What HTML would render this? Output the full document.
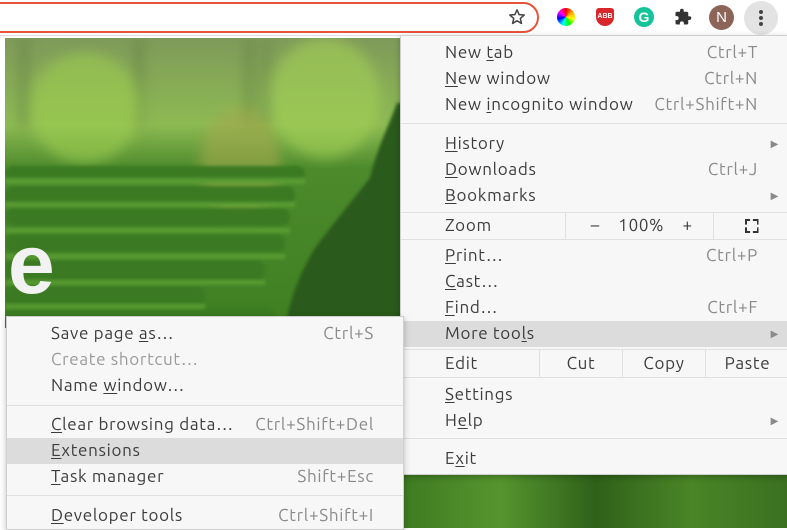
<!DOCTYPE html>
<html><head><meta charset="utf-8"><style>
*{margin:0;padding:0;box-sizing:border-box}
body{width:787px;height:528px;overflow:hidden;background:#fff;position:relative;font-family:"Ubuntu","Liberation Sans","DejaVu Sans",sans-serif;font-size:17px;letter-spacing:0.7px;color:#3c3c3c}
.top{position:absolute;left:0;top:0;width:787px;height:36px;background:#fff;border-bottom:1px solid #ddd}
.addr{position:absolute;left:-20px;top:2px;width:559px;height:31px;border:2px solid #e8533a;border-radius:16px;background:#fff}
.bg{position:absolute;left:5px;top:38px;width:782px;height:490px;overflow:hidden}
.bg2{position:absolute;left:404px;top:475px;width:383px;height:53px;background:linear-gradient(90deg,#3f7b22,#55952e,#2f611a,#4a8526,#3a7020)}
.e{position:absolute;left:8px;top:222px;font:bold 84px "Liberation Sans",sans-serif;color:#f2f2f2;line-height:1;letter-spacing:0}
.menu{position:absolute;background:#f7f7f7;border:1px solid #cfcfcf;box-shadow:0 2px 6px rgba(0,0,0,.25)}
.r{position:absolute;left:0;right:0;height:26px;line-height:26px;padding-left:44px;white-space:nowrap}
.r .k{position:absolute;right:29px;top:0;color:#8a8a8a}
.r .ar{position:absolute;right:8px;top:0;color:#8a8a8a;font-size:10px}
.hl{background:#dcdcdc}
.sep{position:absolute;left:0;right:0;height:1px;background:#e0e0e0}
.dis{color:#9a9a9a}
u{text-decoration:underline;text-underline-offset:2px}
.cell{position:absolute;top:0;height:100%;border-left:1px solid #e0e0e0;text-align:center;padding:0}
</style></head><body>
<div class="top"><div class="addr"></div>
<svg style="position:absolute;left:508px;top:8px" width="18" height="18" viewBox="0 0 24 24"><path d="M12 2.5l2.8 6.3 6.8.6-5.2 4.5 1.6 6.7L12 17l-5.9 3.6 1.6-6.7L2.4 9.4l6.8-.6z" fill="none" stroke="#444" stroke-width="2" stroke-linejoin="round"/></svg>
<div style="position:absolute;left:557px;top:8px;width:18px;height:18px;border-radius:50%;background:conic-gradient(red,orange,yellow,lime,cyan,blue,magenta,red)"></div>
<div style="position:absolute;left:596px;top:8px;width:18px;height:18px;background:#d9262a;border-radius:3px 3px 9px 9px;color:#fff;font:bold 7px sans-serif;text-align:center;line-height:18px;letter-spacing:0">ABB</div>
<div style="position:absolute;left:634px;top:7px;width:20px;height:20px;border-radius:50%;background:#15c39a;color:#fff;font:bold 14px sans-serif;text-align:center;line-height:20px;letter-spacing:0">G</div>
<svg style="position:absolute;left:674px;top:8px" width="18" height="18" viewBox="0 0 24 24"><path d="M20.5 11H19V7a2 2 0 0 0-2-2h-4V3.5a2.5 2.5 0 0 0-5 0V5H4a2 2 0 0 0-2 2v3.8h1.5a2.7 2.7 0 0 1 0 5.4H2V20a2 2 0 0 0 2 2h3.8v-1.5a2.7 2.7 0 0 1 5.4 0V22H17a2 2 0 0 0 2-2v-4h1.5a2.5 2.5 0 0 0 0-5z" fill="#333"/></svg>
<div style="position:absolute;left:709px;top:5px;width:25px;height:25px;border-radius:50%;background:#8d6458;color:#fff;font:15px sans-serif;text-align:center;line-height:25px;letter-spacing:0">N</div>
<div style="position:absolute;left:744px;top:1px;width:34px;height:34px;border-radius:50%;background:#e3e3e3"></div>
<div style="position:absolute;left:759px;top:10px;width:4px;height:4px;border-radius:50%;background:#444;box-shadow:0 6px 0 #444,0 12px 0 #444"></div>
</div>
<div class="bg"><svg width="400" height="290" viewBox="0 0 400 290">
<defs><linearGradient id="g" x1="0" y1="0" x2="0" y2="1"><stop offset="0" stop-color="#7f9a5a"/><stop offset=".3" stop-color="#8dba52"/><stop offset=".45" stop-color="#4c8a2c"/><stop offset="1" stop-color="#3f7f22"/></linearGradient>
<filter id="b"><feGaussianBlur stdDeviation="6"/></filter><filter id="b2"><feGaussianBlur stdDeviation="1.5"/></filter></defs>
<rect width="400" height="290" fill="url(#g)"/>
<g filter="url(#b)">
<g fill="#5f7f42" opacity=".6"><rect x="15" y="0" width="8" height="90"/><rect x="130" y="0" width="8" height="90"/><rect x="240" y="0" width="8" height="90"/><rect x="258" y="0" width="6" height="90"/></g>
<ellipse cx="80" cy="70" rx="55" ry="55" fill="#9ccd50" opacity=".6"/>
<ellipse cx="320" cy="60" rx="55" ry="60" fill="#a4d055" opacity=".6"/>
<ellipse cx="235" cy="125" rx="40" ry="55" fill="#a2a84c" opacity=".6"/>
</g>
<g filter="url(#b2)">
<g fill="#3b7a22"><rect y="128" width="300" height="16" rx="8"/><rect y="148" width="290" height="18" rx="8"/><rect y="170" width="285" height="18" rx="8"/><rect y="196" width="280" height="18" rx="8"/><rect y="222" width="260" height="20" rx="8"/><rect y="248" width="200" height="20" rx="8"/><rect y="270" width="270" height="20" rx="8"/></g>
<g fill="#5da236" opacity=".8"><rect y="140" width="300" height="6"/><rect y="164" width="290" height="5"/><rect y="190" width="285" height="5"/><rect y="216" width="280" height="5"/><rect y="242" width="260" height="5"/><rect y="266" width="200" height="5"/></g>
<path d="M392 65 C385 85 372 110 365 140 C345 165 325 190 310 210 C295 235 285 260 280 290 L400 290 L400 65 Z" fill="#2b5a1c"/>
</g>
</svg></div>
<div class="bg2"></div>
<div class="e">e</div>

<div class="menu" style="left:400px;top:35px;width:388px;height:440px">
<div class="r" style="top:4px">New <u>t</u>ab<span class="k">Ctrl+T</span></div>
<div class="r" style="top:30px"><u>N</u>ew window<span class="k">Ctrl+N</span></div>
<div class="r" style="top:56px">New <u>i</u>ncognito window<span class="k">Ctrl+Shift+N</span></div>
<div class="sep" style="top:87px"></div>
<div class="r" style="top:95px"><u>H</u>istory<span class="ar">▶</span></div>
<div class="r" style="top:121px"><u>D</u>ownloads<span class="k">Ctrl+J</span></div>
<div class="r" style="top:147px"><u>B</u>ookmarks<span class="ar">▶</span></div>
<div class="sep" style="top:176px"></div>
<div class="r" style="top:177px">Zoom
<div class="cell" style="left:164px;width:148px">&nbsp;–&nbsp;&nbsp;&nbsp;&nbsp;100%&nbsp;&nbsp;&nbsp;&nbsp;+</div>
<div class="cell" style="left:312px;width:76px"><span style="display:inline-block;width:14px;height:14px;margin-top:6px;border:2px solid #333;clip-path:polygon(0 0,40% 0,40% 40%,60% 40%,60% 0,100% 0,100% 40%,60% 40%,60% 60%,100% 60%,100% 100%,60% 100%,60% 60%,40% 60%,40% 100%,0 100%,0 60%,40% 60%,40% 40%,0 40%)"></span></div></div>
<div class="sep" style="top:203px"></div>
<div class="r" style="top:207px"><u>P</u>rint…<span class="k">Ctrl+P</span></div>
<div class="r" style="top:233px"><u>C</u>ast…</div>
<div class="r" style="top:259px"><u>F</u>ind…<span class="k">Ctrl+F</span></div>
<div class="r hl" style="top:285px">More too<u>l</u>s<span class="ar">▶</span></div>
<div class="sep" style="top:313px"></div>
<div class="r" style="top:314px;height:27px;line-height:27px">Edit
<div class="cell" style="left:138px;width:83px">Cut</div>
<div class="cell" style="left:221px;width:83px">Copy</div>
<div class="cell" style="left:304px;width:84px">Paste</div></div>
<div class="sep" style="top:341px"></div>
<div class="r" style="top:346px"><u>S</u>ettings</div>
<div class="r" style="top:372px">H<u>e</u>lp<span class="ar">▶</span></div>
<div class="sep" style="top:402px"></div>
<div class="r" style="top:410px">E<u>x</u>it</div>
</div>

<div class="menu" style="left:6px;top:316px;width:398px;height:214px">
<div class="r" style="top:4px">Save page <u>a</u>s…<span class="k">Ctrl+S</span></div>
<div class="r dis" style="top:30px">Create shortcut…</div>
<div class="r" style="top:56px">Name <u>w</u>indow…</div>
<div class="sep" style="top:88px"></div>
<div class="r" style="top:95px"><u>C</u>lear browsing data…<span class="k">Ctrl+Shift+Del</span></div>
<div class="r hl" style="top:121px"><u>E</u>xtensions</div>
<div class="r" style="top:147px"><u>T</u>ask manager<span class="k">Shift+Esc</span></div>
<div class="sep" style="top:178px"></div>
<div class="r" style="top:186px"><u>D</u>eveloper tools<span class="k">Ctrl+Shift+I</span></div>
</div>
</body></html>
